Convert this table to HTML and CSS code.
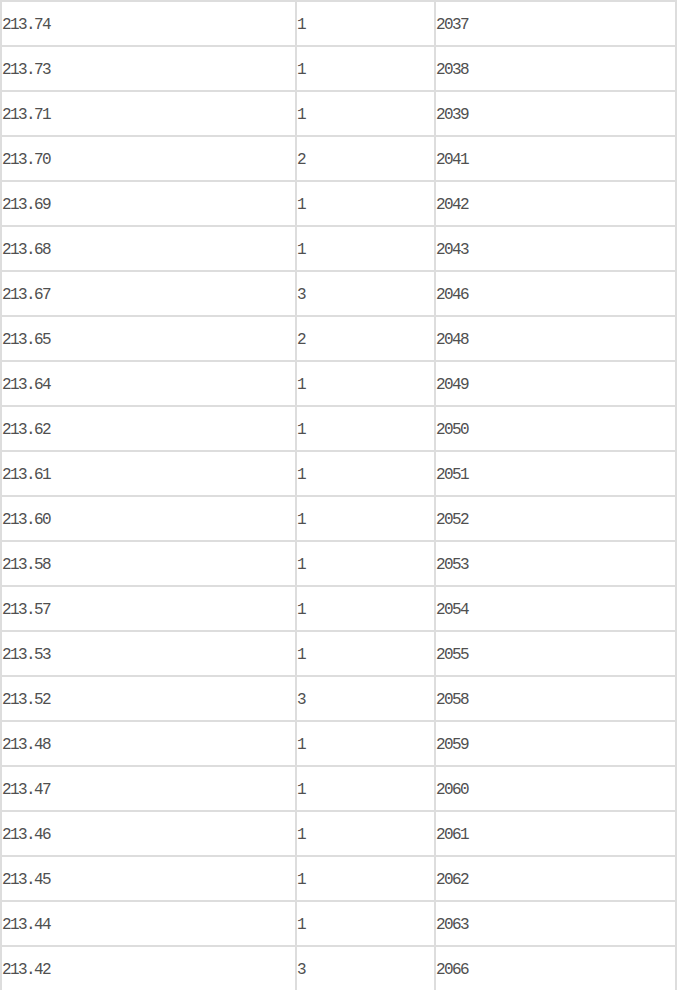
FILE: index.html
```html
<!DOCTYPE html>
<html>
<head>
<meta charset="utf-8">
<link rel="stylesheet" href="styles.css">
</head>
<body>
<div class="table">
<div class="cell">213.74</div><div class="cell">1</div><div class="cell">2037</div>
<div class="cell">213.73</div><div class="cell">1</div><div class="cell">2038</div>
<div class="cell">213.71</div><div class="cell">1</div><div class="cell">2039</div>
<div class="cell">213.70</div><div class="cell">2</div><div class="cell">2041</div>
<div class="cell">213.69</div><div class="cell">1</div><div class="cell">2042</div>
<div class="cell">213.68</div><div class="cell">1</div><div class="cell">2043</div>
<div class="cell">213.67</div><div class="cell">3</div><div class="cell">2046</div>
<div class="cell">213.65</div><div class="cell">2</div><div class="cell">2048</div>
<div class="cell">213.64</div><div class="cell">1</div><div class="cell">2049</div>
<div class="cell">213.62</div><div class="cell">1</div><div class="cell">2050</div>
<div class="cell">213.61</div><div class="cell">1</div><div class="cell">2051</div>
<div class="cell">213.60</div><div class="cell">1</div><div class="cell">2052</div>
<div class="cell">213.58</div><div class="cell">1</div><div class="cell">2053</div>
<div class="cell">213.57</div><div class="cell">1</div><div class="cell">2054</div>
<div class="cell">213.53</div><div class="cell">1</div><div class="cell">2055</div>
<div class="cell">213.52</div><div class="cell">3</div><div class="cell">2058</div>
<div class="cell">213.48</div><div class="cell">1</div><div class="cell">2059</div>
<div class="cell">213.47</div><div class="cell">1</div><div class="cell">2060</div>
<div class="cell">213.46</div><div class="cell">1</div><div class="cell">2061</div>
<div class="cell">213.45</div><div class="cell">1</div><div class="cell">2062</div>
<div class="cell">213.44</div><div class="cell">1</div><div class="cell">2063</div>
<div class="cell">213.42</div><div class="cell">3</div><div class="cell">2066</div>
</div>
</body>
</html>
```
FILE: styles.css
```css
html, body {
  margin: 0;
  padding: 0;
  background: #fff;
}
.table {
  display: grid;
  grid-template-columns: 293px 137px 239px;
  grid-auto-rows: 43px;
  gap: 2px;
  padding: 2px;
  width: 673px;
  background: #dddddd;
}
.cell {
  background: #fff;
  display: flex;
  align-items: center;
  padding-top: 3px;
  box-sizing: border-box;
  font-family: "Liberation Mono", "DejaVu Sans Mono", monospace;
  font-size: 16px;
  letter-spacing: -1.6px;
  color: #505050;
}
```
